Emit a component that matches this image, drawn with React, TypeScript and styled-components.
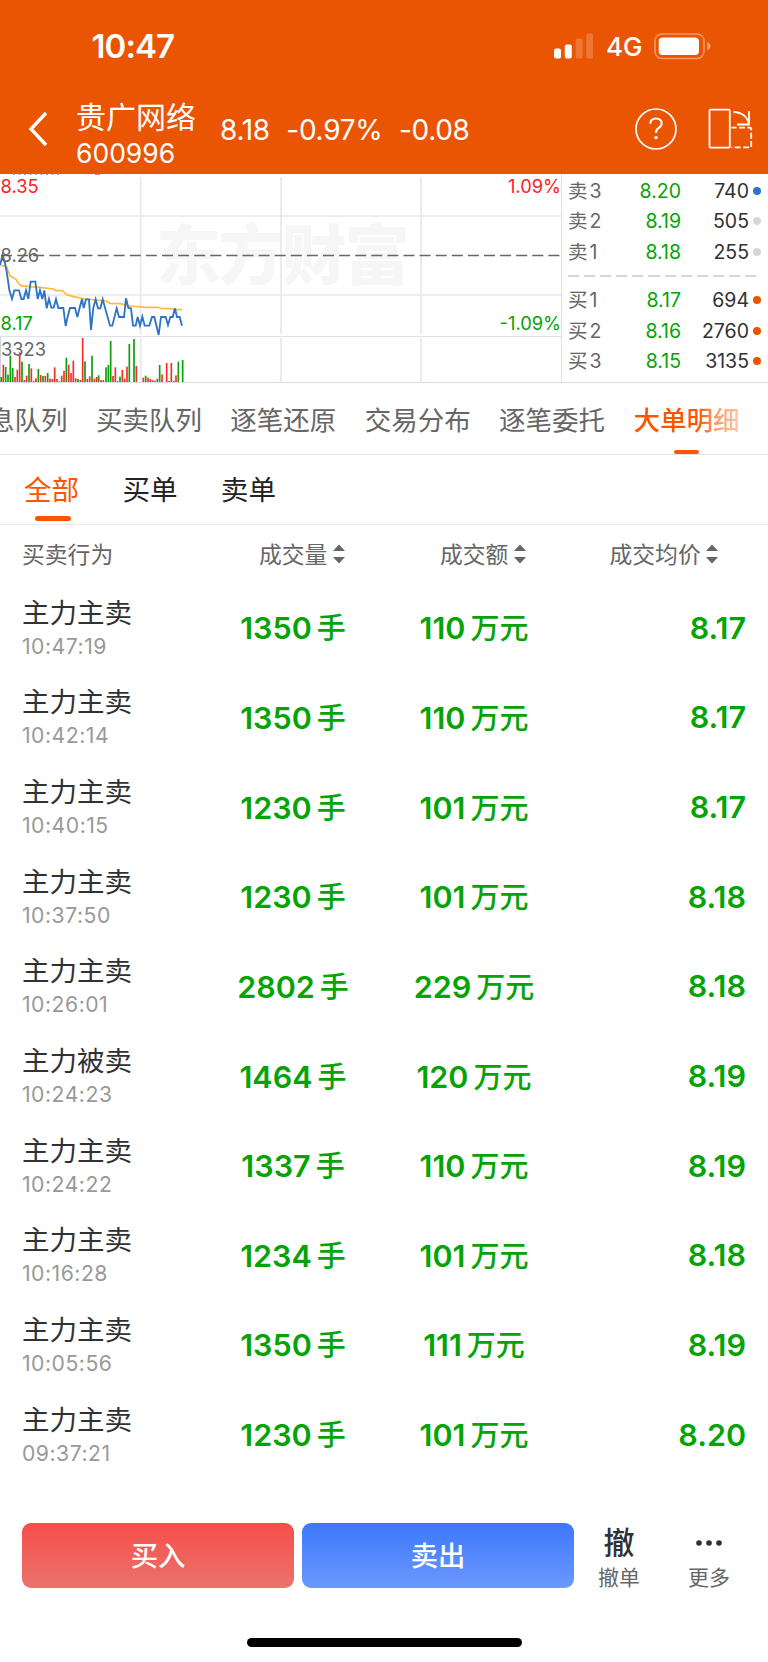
import React from 'react';
import styled, { createGlobalStyle } from 'styled-components';

const Global = createGlobalStyle`
  * { box-sizing: border-box; }
  body { margin: 0; background: #fff; font-family: Inter, "Noto Sans CJK SC", sans-serif; color: #303133; }
`;

const Screen = styled.main`
  width: 768px;
  height: 1662px;
  display: flex;
  flex-direction: column;
  overflow: hidden;
  background: #fff;
`;

const Top = styled.header`
  height: 174px;
  flex: none;
  background: #ea5504;
  color: #fff;
`;

const StatusBar = styled.div`
  height: 92px;
  display: flex;
  align-items: center;
  justify-content: space-between;
  padding: 0 57px 0 91.5px;
`;

const Clock = styled.span`
  font-size: 33px;
  font-weight: 600;
  line-height: 40px;
  letter-spacing: -0.9px;
`;

const StatusIcons = styled.div`
  display: flex;
  align-items: center;
`;

const Network = styled.span`
  width: 36px;
  margin: 2px 12px 0 13px;
  font-size: 26px;
  font-weight: 500;
  line-height: 30px;
`;

const TitleBar = styled.div`
  height: 82px;
  display: flex;
  align-items: center;
  padding: 0 0 8px 28px;
`;

const Names = styled.div`
  width: 144px;
  margin-left: 27px;
  padding-top: 10px;
  display: flex;
  flex-direction: column;
`;

const StockName = styled.span`
  font-size: 30px;
  line-height: 37px;
  white-space: nowrap;
`;

const StockCode = styled.span`
  font-size: 26.5px;
  line-height: 34px;
`;

const Quote = styled.div`
  flex: 1;
  display: flex;
  gap: 16.5px;
  font-size: 28px;
  line-height: 34px;
  letter-spacing: -0.3px;
  padding-top: 2px;
`;

const HeaderIcons = styled.div`
  display: flex;
  align-items: center;
  gap: 31px;
  padding: 0 15px 0 0;
`;

const Market = styled.section`
  height: 209px;
  flex: none;
  display: flex;
  border-bottom: 1px solid #dcdde4;
`;

const Book = styled.div`
  width: 207px;
  height: 208px;
  border-left: 1px solid #dfe1ea;
  padding: 1.5px 7px 0 6px;
`;

const BookRow = styled.div`
  height: 30.5px;
  display: flex;
  align-items: center;
  font-size: 19.5px;
  line-height: 30px;
`;

const Level = styled.span`
  width: 50px;
  color: #666;
  word-spacing: -3.5px;
`;

const BookPrice = styled.span`
  width: 63px;
  color: #06a306;
  text-align: right;
`;

const BookVolume = styled.span`
  flex: 1;
  text-align: right;
`;

const Dot = styled.i<{ $color: string }>`
  width: 8px;
  height: 8px;
  margin-left: 4px;
  border-radius: 50%;
  background: ${(p) => p.$color};
`;

const BookDivider = styled.div`
  height: 2px;
  margin: 8px 5px 8px 0;
  background: repeating-linear-gradient(90deg, #d3d6dd 0 11px, transparent 11px 16.1px);
`;

const Tabs = styled.nav`
  height: 72px;
  flex: none;
  display: flex;
  gap: 28.4px;
  margin-left: -38.5px;
  padding-top: 2px;
  border-bottom: 1px solid #e4e4e6;
`;

const Tab = styled.div<{ $active?: boolean }>`
  flex: none;
  display: flex;
  flex-direction: column;
  align-items: center;
  justify-content: space-between;
  font-size: 26.5px;
  line-height: 70px;
  height: 69px;
  font-weight: ${(p) => (p.$active ? 500 : 400)};
  color: ${(p) => (p.$active ? '#ff5500' : '#666')};
`;

const TabText = styled.span<{ $fade?: boolean }>`
  height: 65px;
  ${(p) =>
    p.$fade &&
    `background: linear-gradient(90deg, #ff5500 60%, #ff9a69 78%, #ffc4a8 100%);
     background-clip: text; -webkit-background-clip: text; color: transparent;`}
`;

const TabLine = styled.i`
  width: 25px;
  height: 4px;
  border-radius: 2px;
  background: #ff5500;
`;

const Filters = styled.nav`
  height: 70px;
  flex: none;
  display: flex;
  gap: 43.2px;
  padding: 0 24px;
  border-bottom: 1px solid #ececee;
`;

const Filter = styled.div<{ $active?: boolean }>`
  display: flex;
  flex-direction: column;
  align-items: center;
  font-size: 27.6px;
  line-height: 71px;
  color: ${(p) => (p.$active ? '#ff5500' : '#222')};

  span { height: 61px; }
`;

const FilterLine = styled.i`
  width: 36px;
  height: 5px;
  margin-left: 2px;
  border-radius: 3px;
  background: #ff5500;
`;

const TableHead = styled.div`
  height: 59px;
  flex: none;
  display: grid;
  grid-template-columns: 237px 181px 169.5px 144px;
  padding-left: 22px;
  font-size: 22.8px;
  line-height: 57px;
  color: #666;
`;

const HeadCell = styled.div`
  height: 58px;
  display: flex;
  align-items: center;
  gap: 5.5px;
  white-space: nowrap;
`;

const Trade = styled.div`
  height: 89.65px;
  flex: none;
  display: grid;
  grid-template-columns: 182px 178px 184px 180px;
  align-items: center;
  padding-left: 22px;
  color: #06a306;
  font-size: 30.5px;
  font-weight: 600;
`;

const Action = styled.div`
  display: flex;
  flex-direction: column;
  font-weight: 400;
`;

const ActionName = styled.span`
  font-size: 27.5px;
  line-height: 35px;
  color: #303133;
`;

const ActionTime = styled.span`
  font-size: 21.2px;
  line-height: 31px;
  letter-spacing: 0.5px;
  color: #999;
`;

const Amount = styled.div`
  display: flex;
  align-items: baseline;
  justify-content: center;
  gap: 5px;
  line-height: 40px;
`;

const Unit = styled.span`
  font-size: 29px;
  font-weight: 500;
`;

const Price = styled.div`
  text-align: right;
  line-height: 40px;
  padding-bottom: 2px;
`;

const Footer = styled.footer`
  height: 65px;
  margin-top: 42.5px;
  flex: none;
  display: flex;
  padding-left: 22px;
`;

const TradeButton = styled.button<{ $from: string; $to: string }>`
  width: 272px;
  height: 65px;
  margin-right: 8px;
  border: 0;
  border-radius: 9px;
  background: linear-gradient(${(p) => p.$from}, ${(p) => p.$to});
  color: #fff;
  font: 500 27.3px/65px Inter, "Noto Sans CJK SC", sans-serif;
  padding: 1px 0 0;
`;

const Tool = styled.div<{ $width: number }>`
  width: ${(p) => p.$width}px;
  display: flex;
  flex-direction: column;
  align-items: center;
  font-size: 21px;
  line-height: 30px;
  color: #666;
`;

const ToolGlyph = styled.div`
  height: 40px;
  flex: none;
  display: flex;
  align-items: center;
  font-size: 31px;
  font-weight: 500;
  line-height: 38px;
  color: #303133;
`;

const HomeIndicator = styled.div`
  width: 275px;
  height: 9px;
  margin: 50.5px auto 0;
  flex: none;
  border-radius: 5px;
  background: #000;
`;

const R = '#fb2b2b';
const G = '#0aa00a';

/* [x, top, colour] on the three-times grid of the chart, all resting on 652 */
const volumes: [number, number, string][] = [
  [4, 636, G], [10, 599, R], [17, 606, G], [24, 629, G], [31, 572, G], [38, 609, G], [45, 636, R], [52, 614, R],
  [59, 562, R], [66, 590, G], [73, 645, R], [80, 632, R], [87, 597, G], [94, 610, R], [101, 647, R], [108, 640, R],
  [115, 612, G], [122, 630, R], [129, 633, G], [136, 633, R], [143, 624, G], [150, 641, R], [157, 642, R],
  [164, 607, R], [171, 642, R], [178, 649, G], [185, 632, R], [192, 617, R], [199, 578, G], [206, 599, R],
  [213, 624, R], [220, 587, R], [227, 640, R], [234, 642, G], [241, 645, R], [248, 519, R], [255, 589, G],
  [262, 642, R], [269, 634, R], [276, 572, G], [283, 641, R], [290, 636, R], [296, 631, G], [303, 645, R],
  [310, 645, R], [318, 607, G], [325, 600, G], [332, 528, G], [339, 633, R], [346, 607, R], [353, 648, R],
  [360, 635, G], [367, 615, R], [374, 641, R], [381, 605, R], [388, 537, G], [402, 522, G], [409, 603, R],
  [430, 638, R], [437, 632, G], [444, 638, R], [451, 642, R], [458, 646, R], [465, 647, R], [472, 641, G],
  [479, 600, G], [486, 628, R], [500, 594, R], [507, 648, G], [514, 594, R], [521, 647, R], [528, 631, R],
  [535, 590, G], [548, 585, G],
];

const pricePath =
  '0,300 8,270 15,295 20,320 28,375 36,402 43,376 57,376 64,402 71,402 78,376 85,402 92,350 106,350 113,402 120,376 127,402 133,376 140,430 147,402 154,428 161,428 168,402 175,429 190,429 197,483 203,455 210,429 225,429 232,456 239,428 246,402 251,429 258,403 267,403 273,495 280,429 287,403 294,430 301,430 308,403 330,482 337,482 350,430 357,456 372,456 378,400 385,429 393,430 399,482 407,482 413,456 420,482 427,455 434,482 448,482 456,456 463,456 476,510 483,456 497,456 504,480 511,456 518,456 525,430 531,456 539,456 546,482';
const averagePath =
  '0,300 20,306 30,333 40,338 48,343 55,355 63,362 90,365 120,367 160,372 167,377 187,377 200,389 220,395 255,402 318,408 330,415 360,416 390,423 440,427 475,427 483,430 510,431 520,433 546,434';

const Chart = () => (
  <svg width="561" height="208" viewBox="0 174 561 208" fontFamily="Inter" fontSize="18.3">
    <text x="156" y="279" fontFamily="Noto Sans CJK SC" fontWeight="900" fontSize="65" letterSpacing="-2.2" fill="#f6f6f6">
      东方财富
    </text>
    <g stroke="#e6e8f0" strokeWidth="1.7">
      <path d="M0 216H561M0 295H561" />
      <path d="M140.7 177V334M281 177V334M421 177V334M140.7 338V382M281 338V382M421 338V382" />
    </g>
    <path d="M0 336.5H561" stroke="#dfe1ea" />
    <path d="M0.5 337V382" stroke="#d0d2da" />
    <path d="M13 174.5H62" stroke="#aaa" strokeDasharray="2 3.5" />
    <path d="M95 174.5H100" stroke="#f77" />
    <path d="M1 255.5H561" stroke="#666" strokeWidth="1.3" strokeDasharray="11 5.1" />
    <g transform="translate(0 165) scale(.33333)">
      {volumes.map(([x, y, c]) => (
        <rect key={x} x={x - 2.5} y={y} width="5" height={652 - y} fill={c} />
      ))}
      <polyline points={averagePath} fill="none" stroke="#fdbb3c" strokeWidth="5" />
      <polyline points={pricePath} fill="none" stroke="#2f73c4" strokeWidth="5.5" />
    </g>
    <text x="0.5" y="192.5" fill="#fb2222">8.35</text>
    <text x="0.5" y="261.5" fill="#666">8.26</text>
    <text x="0.5" y="330" fill="#06a306">8.17</text>
    <text x="1" y="355.5" fill="#666">3323</text>
    <text x="561" y="192.5" textAnchor="end" fill="#fb2222">1.09%</text>
    <text x="561" y="330" textAnchor="end" fill="#06a306">-1.09%</text>
  </svg>
);

const Signal = () => (
  <svg width="39" height="26" viewBox="0 0 39 26" fill="#fff">
    <rect y="15.5" width="7" height="10" rx="2" />
    <rect x="10.8" y="11.5" width="7" height="14" rx="2" />
    <rect x="21.6" y="5.5" width="7" height="20" rx="2" opacity=".2" />
    <rect x="32.2" y="0.5" width="7" height="25" rx="2" opacity=".2" />
  </svg>
);

const Battery = () => (
  <svg width="57" height="27" viewBox="0 0 57 27">
    <rect x="1" y="1" width="49" height="24.5" rx="7" fill="none" stroke="#fff" strokeWidth="1.6" opacity=".4" />
    <rect x="4.7" y="4.5" width="40.3" height="17.5" rx="4" fill="#fff" />
    <path d="M53.3 9v8.5c4-1.5 4-7 0-8.5z" fill="#fff" opacity=".45" />
  </svg>
);

const Back = () => (
  <svg width="21" height="36" viewBox="0 0 21 36" fill="none" stroke="#fff" strokeWidth="3.4">
    <path d="M18 2 3 18l15 16" />
  </svg>
);

const Help = () => (
  <svg width="42" height="42" viewBox="0 0 42 42" fill="none" stroke="#fff" strokeWidth="1.7">
    <circle cx="21" cy="21" r="20" />
    <path d="M15.3 15.8c.1-3.4 2.4-5.4 5.7-5.4 3.4 0 5.7 2 5.7 4.9 0 2.5-1.4 3.7-3.2 4.9-1.8 1.1-2.5 2.1-2.5 4.7" strokeWidth="2" />
    <circle cx="21" cy="29.6" r="1.7" fill="#fff" stroke="none" />
  </svg>
);

const Rotate = () => (
  <svg width="45" height="42" viewBox="0 0 45 42" fill="none" stroke="#fff" strokeWidth="1.8">
    <rect x="1.5" y="1.6" width="20.3" height="38" rx="1" />
    <path d="M25.5 4C34 4.3 39.7 9 41 16.5M41 3v13.5H29" />
    <path d="M23.5 19.6h18.7q1 0 1 1v18.8H23.5" strokeDasharray="6 2.4" strokeDashoffset="1" />
  </svg>
);

const Sort = () => (
  <svg width="12" height="20" viewBox="0 0 12 20" fill="#666">
    <path d="M0 7 6 0.5 12 7zM0 13h12l-6 6.5z" />
  </svg>
);

const More = () => (
  <svg width="28" height="8" viewBox="0 0 28 8" fill="#303133">
    <circle cx="4" cy="4" r="2.8" />
    <circle cx="14" cy="4" r="2.8" />
    <circle cx="24" cy="4" r="2.8" />
  </svg>
);

const asks = [
  ['卖 3', '8.20', '740', '#2f73c4'],
  ['卖 2', '8.19', '505', '#d3d6dd'],
  ['卖 1', '8.18', '255', '#d3d6dd'],
];
const bids = [
  ['买 1', '8.17', '694', '#ea5504'],
  ['买 2', '8.16', '2760', '#ea5504'],
  ['买 3', '8.15', '3135', '#ea5504'],
];

const BookRows = ({ rows }: { rows: string[][] }) => (
  <>
    {rows.map(([level, price, volume, color]) => (
      <BookRow key={level}>
        <Level>{level}</Level>
        <BookPrice>{price}</BookPrice>
        <BookVolume>{volume}</BookVolume>
        <Dot $color={color} />
      </BookRow>
    ))}
  </>
);

const trades = [
  ['主力主卖', '10:47:19', '1350', '110', '8.17'],
  ['主力主卖', '10:42:14', '1350', '110', '8.17'],
  ['主力主卖', '10:40:15', '1230', '101', '8.17'],
  ['主力主卖', '10:37:50', '1230', '101', '8.18'],
  ['主力主卖', '10:26:01', '2802', '229', '8.18'],
  ['主力被卖', '10:24:23', '1464', '120', '8.19'],
  ['主力主卖', '10:24:22', '1337', '110', '8.19'],
  ['主力主卖', '10:16:28', '1234', '101', '8.18'],
  ['主力主卖', '10:05:56', '1350', '111', '8.19'],
  ['主力主卖', '09:37:21', '1230', '101', '8.20'],
];

export default function App() {
  return (
    <Screen>
      <Global />
      <Top>
        <StatusBar>
          <Clock>10:47</Clock>
          <StatusIcons>
            <Signal />
            <Network>4G</Network>
            <Battery />
          </StatusIcons>
        </StatusBar>
        <TitleBar>
          <Back />
          <Names>
            <StockName>贵广网络</StockName>
            <StockCode>600996</StockCode>
          </Names>
          <Quote>
            <span>8.18</span>
            <span>-0.97%</span>
            <span>-0.08</span>
          </Quote>
          <HeaderIcons>
            <Help />
            <Rotate />
          </HeaderIcons>
        </TitleBar>
      </Top>
      <Market>
        <Chart />
        <Book>
          <BookRows rows={asks} />
          <BookDivider />
          <BookRows rows={bids} />
        </Book>
      </Market>
      <Tabs>
        {['消息队列', '买卖队列', '逐笔还原', '交易分布', '逐笔委托'].map((t) => (
          <Tab key={t}>
            <TabText>{t}</TabText>
          </Tab>
        ))}
        <Tab $active>
          <TabText $fade>大单明细</TabText>
          <TabLine />
        </Tab>
      </Tabs>
      <Filters>
        <Filter $active>
          <span>全部</span>
          <FilterLine />
        </Filter>
        <Filter>
          <span>买单</span>
        </Filter>
        <Filter>
          <span>卖单</span>
        </Filter>
      </Filters>
      <TableHead>
        <HeadCell>买卖行为</HeadCell>
        <HeadCell>成交量<Sort /></HeadCell>
        <HeadCell>成交额<Sort /></HeadCell>
        <HeadCell>成交均价<Sort /></HeadCell>
      </TableHead>
      {trades.map(([name, time, hands, money, price]) => (
        <Trade key={time}>
          <Action>
            <ActionName>{name}</ActionName>
            <ActionTime>{time}</ActionTime>
          </Action>
          <Amount>{hands}<Unit>手</Unit></Amount>
          <Amount>{money}<Unit>万元</Unit></Amount>
          <Price>{price}</Price>
        </Trade>
      ))}
      <Footer>
        <TradeButton $from="#f54e49" $to="#ec736d">买入</TradeButton>
        <TradeButton $from="#3b78fa" $to="#6c98ff">卖出</TradeButton>
        <Tool $width={74}>
          <ToolGlyph>撤</ToolGlyph>
          撤单
        </Tool>
        <Tool $width={106}>
          <ToolGlyph><More /></ToolGlyph>
          更多
        </Tool>
      </Footer>
      <HomeIndicator />
    </Screen>
  );
}
